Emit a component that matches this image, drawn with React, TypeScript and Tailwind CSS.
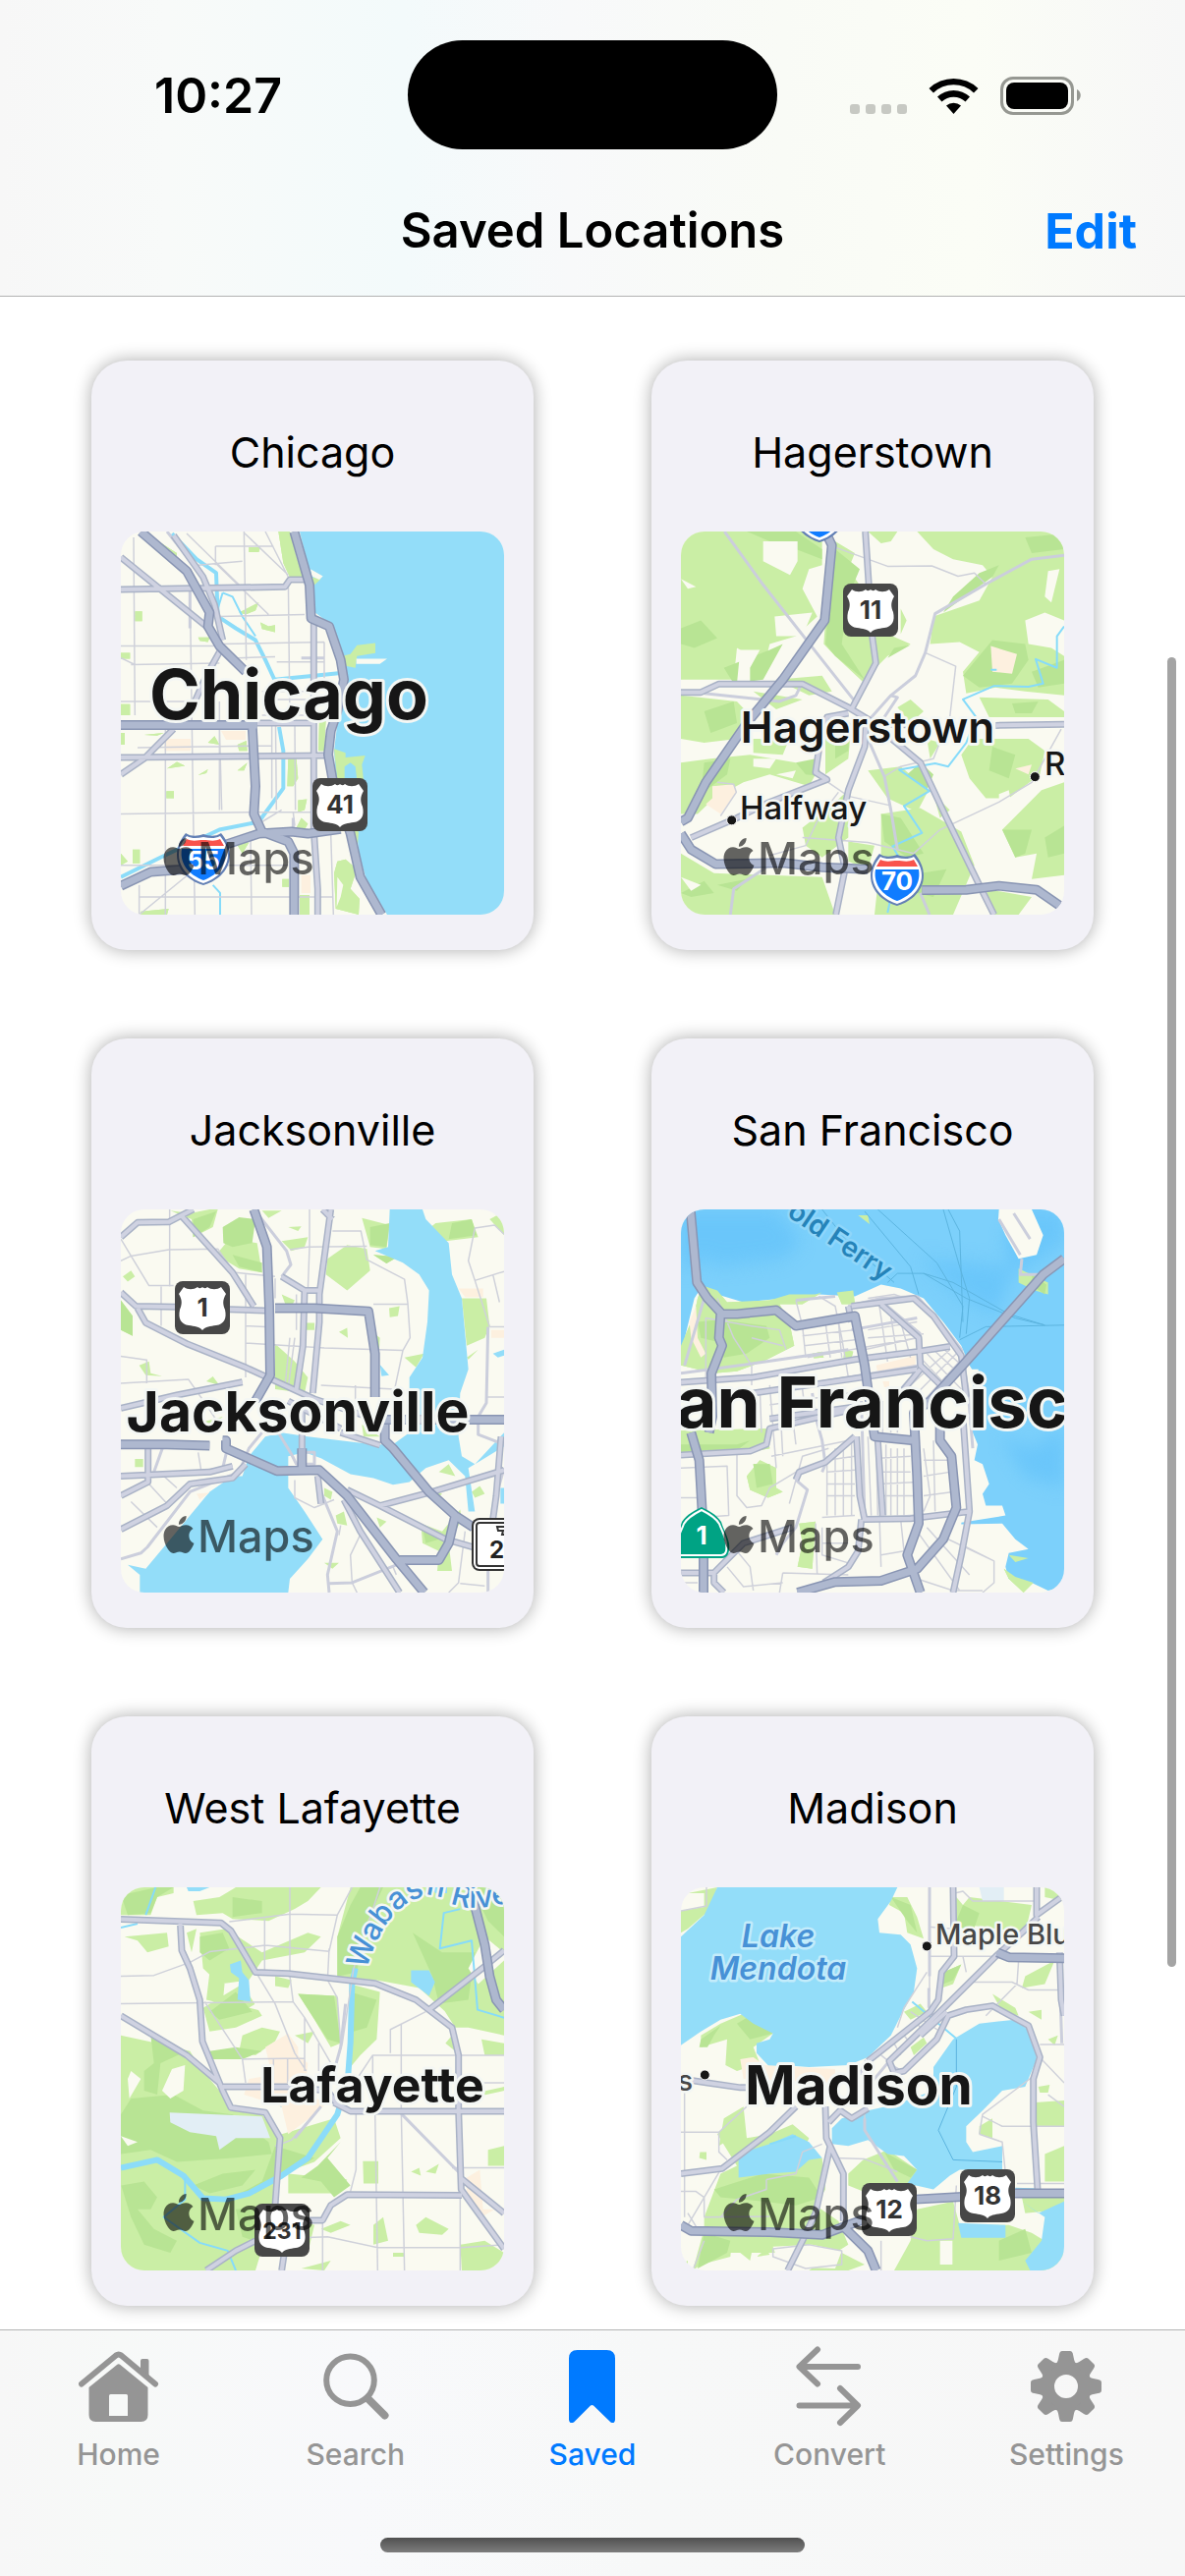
import React from "react";
import { SiApple } from "react-icons/si";

/* ---------- map model ---------- */

type Label = {
  text: string;
  x: number;
  y: number;
  size: number;
  weight?: number;
  anchor?: "start" | "middle" | "end";
  fill?: string;
  halo?: string;
  italic?: boolean;
  rotate?: number;
  curve?: string;
};

type Shield = { kind: "us" | "interstate" | "california" | "florida"; x: number; y: number; text: string };

type CityMap = {
  name: string;
  water?: string;
  deep?: string;
  waterFill?: string;
  green?: string;
  dark?: string;
  land?: string;
  peach?: string;
  pale?: string;
  river?: string;
  creek?: string;
  ferry?: string;
  minor?: string;
  street?: string;
  road?: string;
  highway?: string;
  dots?: [number, number][];
  labels: Label[];
  shields: Shield[];
};

const LAND = "#fafaf1";
const INK = "#161616";
const LAKE = "#4791d6";

const cities: CityMap[] = [
  {
    name: "Chicago",
    water:
      "M675 475 700 560 722 680 770 710 800 790 820 850 800 900 790 960 780 1030 785 1090 850 1230 855 1290 880 1360 942 1445H1299V475Z",
    green:
      "M610 475H645L665 540 690 600H650L625 555ZM707 590 740 595 718 612ZM805 790 830 785 850 763 906 757V783L850 790 845 820 815 815ZM780 1025 815 1035V1047L875 1042 865 1065 870 1105H850L845 1070 830 1060 812 1070V1105H790ZM172 677h22v25h-22zM129 782h28v15h-28zM129 912h28v28h-28zM129 985h12v30h-12zM520 515h35l-5 12h-30zM490 680 550 655 540 675 510 685ZM555 705 580 715 600 712V730L560 722ZM365 743H400L395 755 370 752ZM200 990 260 985 240 992ZM395 1010 415 993 430 1015ZM485 1015 512 1005 515 1030H490ZM270 1075 300 1058 325 1068ZM365 1092 395 1077 390 1087ZM485 1080 515 1060 505 1080ZM268 1132h23v18h-23zM640 1050h25l5 50-15 20h-18zM735 950h20l-5 80h-18zM670 1155 697 1153 690 1180 670 1185ZM680 1200 700 1215 690 1230 665 1225ZM480 1262H520L500 1290ZM165 1280h22v35h-22zM129 1290 150 1310 129 1320ZM790 1310 815 1305 850 1330 830 1380 858 1405 855 1445 785 1430 780 1340ZM675 1395h30v50h-30zM190 1437 275 1430 270 1445H190ZM225 490 300 530V543L250 510ZM825 1230 855 1235 850 1290ZM622 1355h20v20h-20z",
    land: "M848 797H942L920 810H848ZM790 1350 808 1370 800 1400 788 1425ZM708 570 746 588 735 597 712 588Z",
    peach: "M262 1000h80v30h-80zM435 980h75v22h-60zM680 1345h28v45h-28z",
    river: "M612 970 625 1030V1125L550 1210 430 1230 250 1300 129 1350M598 850 720 840 815 832M285 480 360 545 420 580 425 690 480 720 540 750 570 800 598 850",
    creek: "M440 630 470 640 500 690 540 740M440 630 425 670M410 1370 432 1390V1445",
    minor:
      "M168 490 172 940M265 970V1445M340 620 350 1190 355 1445M418 512H595M418 512V560M505 475 512 800M505 478 640 585M570 475 640 590 645 960M418 555 580 685M330 480 490 610M129 765H420M160 812 430 808M129 795 172 812M129 905H360M430 760 750 755M430 690 690 685M485 795 600 792M605 805H750M600 850 604 1180M660 960 662 1180M750 755V870M430 905V1180M180 1022 590 1017M345 900V960M129 1190 520 1186M129 1320H640M185 1400H775M185 1445 340 1340M525 1250 528 1445M185 1370V1445M770 1240 778 1445M520 1186H720M430 970 437 1180M560 1210 620 1180M655 1185 660 1220M365 560 500 550M560 880H700M560 900H700M560 940H700M590 960V1150",
    street: "M655 1200V1240M340 570V720M680 795H750M270 475 370 580 400 640",
    road: "M129 622 630 615 645 597 690 597M129 540 390 715M545 960H720M129 1047 760 1042M718 700V1230L730 1380V1445M129 1090 200 1050 290 975M290 485 380 590 415 660 440 750M430 780 390 840 355 905",
    highway:
      "M190 475 330 575 400 680 395 715 430 765 510 830M658 475 705 610 710 695 765 715 800 800 810 850 790 930 770 980 762 1040 775 1100 830 1240 860 1350 925 1445M129 965H545M530 965 540 1120 535 1190 560 1235 640 1260 658 1290V1445M129 1372 220 1337 330 1330 440 1270 550 1240 650 1235 700 1240 800 1228",
    labels: [{ text: "Chicago", x: 171, y: 191, size: 70, weight: 700, anchor: "middle" }],
    shields: [
      { kind: "us", x: 195, y: 251, text: "41" },
      { kind: "interstate", x: 57, y: 307, text: "55" },
    ],
  },
  {
    name: "Hagerstown",
    green:
      "M129 475H560L560 560 520 570 500 620 545 690 480 740 400 760 385 810 300 770 290 850 129 850ZM129 890 300 905 340 940 300 1000 200 1010 129 1000ZM129 1060 220 1050 340 1040 480 1060 540 1090 520 1120 400 1090 320 1110 230 1150 180 1190 129 1190ZM850 475H1299V700L1240 680 1180 700 1190 760 1260 770 1299 790V890L1180 880 1090 870 1000 885 990 830 1040 780 980 755 890 760 900 690 1040 650 1080 590 1050 560 960 545 900 520ZM700 475H790L770 500 740 505ZM1020 1000H1190L1240 1030 1225 1090 1130 1150 1060 1150 1010 1100 985 1040ZM1040 895 1250 900 1299 930V945H1070ZM1230 1130 1299 1110V1345L1200 1355 1215 1290 1150 1300 1110 1230ZM570 950 650 960 640 1050 570 1090ZM700 1080 800 1070 885 1130 850 1185 760 1150ZM740 1190 860 1175 985 1235 1025 1320 960 1445H720L740 1290ZM129 1290 230 1340 560 1350 600 1445H129ZM500 1225 600 1160 640 1130V1250L560 1300 510 1270ZM600 500 660 530 640 570 700 640 720 720 830 760 760 790 700 840 690 860 600 790 565 760 570 700ZM420 850 560 840 590 880 520 890ZM790 920 830 900 870 930 830 960ZM350 1000H460L440 1040 350 1035ZM1060 1380 1200 1400 1160 1445H1080ZM880 1000 920 1010 890 1050ZM800 670 818 700 800 735ZM350 880 500 900 420 925ZM640 1260 720 1270 700 1330 640 1310ZM900 1140 950 1180 920 1200Z",
    dark:
      "M600 520 675 570 640 640 620 760 690 850 600 790 570 760 585 620ZM260 820 400 775 440 760 380 850 290 860ZM200 930 290 905 300 960 220 985ZM1040 580 1100 560 1080 590 980 650 930 680 960 640ZM1080 750 1180 760 1190 800 1140 860 1040 870 990 840ZM1110 1230 1200 1230 1180 1290 1150 1300ZM330 475H480L560 520V545L480 520 400 500ZM740 1190 800 1200 870 1290 820 1300 750 1260ZM200 1060 280 1050 270 1090 190 1140ZM1080 1020 1150 1040 1130 1100 1070 1080ZM129 1390 200 1360 230 1390 160 1400ZM860 1060 900 1090 880 1130 820 1090ZM600 965 645 970 640 1030 600 1050ZM129 720 190 700 240 745 170 770 129 760ZM1180 490 1299 480V520L1200 530ZM1200 830 1299 800V860L1220 870ZM1240 1250 1299 1220V1290L1250 1300ZM780 770 830 762 760 795ZM480 1060 540 1050 560 1095 510 1090ZM860 1340 940 1330 900 1400 850 1390ZM1140 910 1220 905 1200 935 1150 935ZM240 1370 330 1355 300 1385Z",
    land: "M380 500H485V550L462 585 380 550ZM415 690 530 680 500 740 420 740ZM129 595 175 615 150 620ZM1250 575 1285 570 1260 655 1240 640ZM310 775H370L340 820 340 860 300 860ZM350 1050H420L400 1075 350 1070ZM420 1090 480 1080 470 1100ZM129 1350 190 1370 160 1385ZM1100 1140 1130 1130 1140 1170 1100 1170Z",
    peach: "M1075 765 1155 785 1140 835 1080 830ZM1150 1075 1200 1065 1190 1090ZM225 1120 290 1115 298 1135 250 1190 205 1165 225 1150Z",
    creek:
      "M1299 715 1277 740V820L1212 798 1235 860 1190 868 1085 866 990 900 1030 945 1000 1010 945 1070 905 1062 795 1078 888 1132 810 1170 865 1238 775 1272 795 1300 760 1440M1075 825h18",
    minor:
      "M600 515 760 563 895 562 975 588 1025 580 1060 608M875 782 968 816 950 945 900 1050 800 1070 750 1095M1290 975 1240 1050 1200 1110 1100 1160 920 1230 840 1290M240 1110 290 1115 298 1135 250 1195M500 1250 700 1262 840 1290M570 1105 640 1145 765 1168M610 1135 550 1200 510 1270 400 1295",
    street:
      "M262 475 380 610 560 800 660 905M1299 535 1200 545 1060 608 905 683 875 782 845 840 770 890 700 955M770 890 790 895 750 945M200 885 430 905 480 890 495 865M700 1000 750 1095 770 1180 790 1280M390 1325 290 1380 280 1445M860 1390 888 1445",
    road: "M129 882H190L245 861H500L640 920 700 950 860 1060 940 1200 1040 1370 1085 1445M692 475 705 640M712 735 724 808 650 925M160 1250 300 1200 400 1160 575 1103 540 1085 555 1000 575 945 640 935M695 950 690 1020 640 1130 610 1250 630 1330 602 1445M1090 966 1299 963M700 960 830 965",
    highway:
      "M570 475 590 510 568 700 440 850 330 960 205 1110 150 1200 129 1210M129 1240 160 1280 235 1317 440 1314 560 1325 700 1330M865 1383 1000 1382 1100 1372 1215 1382 1290 1425",
    dots: [
      [284, 1206],
      [1210, 1096],
    ],
    labels: [
      { text: "Hagerstown", x: 190, y: 215, size: 44, weight: 600, anchor: "middle" },
      { text: "Halfway", x: 60, y: 293, size: 33, weight: 500 },
      { text: "R", x: 370, y: 248, size: 33, weight: 500 },
    ],
    shields: [
      { kind: "us", x: 165, y: 53, text: "11" },
      { kind: "interstate", x: 193, y: 328, text: "70" },
      { kind: "interstate", x: 114, y: -42, text: "81" },
    ],
  },
  {
    name: "Jacksonville",
    green:
      "M280 478 340 485 400 475H425L410 520 350 545 345 500ZM560 478H620L580 497ZM460 550 545 560 560 635 490 625 420 590ZM640 520 680 518 670 530ZM620 555 700 545 690 570 650 580ZM760 600 820 565 880 575 890 630 820 680 755 640ZM865 497 950 515 940 575 890 570ZM1090 510 1200 500 1220 545 1120 555 1060 530ZM1255 500 1299 480V540ZM900 590 975 595 940 612ZM135 645 160 630 172 645 150 658ZM129 705 165 745V795L129 780ZM620 690 660 705 640 735ZM690 762H720V780H695ZM795 785 820 775 822 800ZM948 725 980 720 975 745 950 748ZM1170 700H1245L1255 770 1240 800 1185 820ZM995 850 1055 840 1030 875ZM185 870 215 860 220 890 255 897 205 895ZM390 910 410 898 430 920ZM600 815 660 860 700 900 690 940 600 930ZM1185 850 1220 830 1190 855ZM172 1107h25v20h-25zM750 1180 775 1190 770 1210 750 1200ZM785 1250 810 1240 820 1275 790 1270ZM910 1255 940 1265 920 1280ZM750 1370 795 1370 775 1385ZM1045 1270 1110 1290 1165 1235 1170 1260 1130 1320 1140 1390 1095 1390 1100 1340 1050 1320ZM1200 1190 1225 1175 1240 1195 1210 1205ZM865 1020 920 1050 870 1050ZM1100 1140 1130 1120 1150 1150ZM350 1020 440 1000 400 1030ZM905 790 920 800 915 860ZM1060 1180 1110 1195 1090 1210Z",
    dark: "M440 520 490 495 540 500 530 560 470 570 442 560ZM890 520 950 510 940 570 890 565ZM1140 510 1200 500 1215 540 1130 550ZM350 500 420 480 400 520 350 545ZM129 705 165 745V795L129 780ZM470 590 560 610V635L490 620ZM1050 1280 1100 1310 1060 1320ZM900 590 975 595 940 612Z",
    water:
      "M950 475H1050L1060 500 1130 560 1140 640 1170 700 1190 880 1165 940 1160 1050 1170 1100 1210 1120 1299 1040V1075L1230 1110 1190 1130 1210 1240 1190 1240 1180 1150 1130 1110 1060 1130 1010 1165 960 1172 900 1155 830 1145 740 1105 690 1090 640 1100V1180L690 1240 745 1310 700 1360 645 1410 640 1445H187V1400L150 1375 205 1385 290 1300 400 1190 470 1150 500 1150 520 1100 570 1050 620 1040 700 1050 800 1060 900 1070 960 1070 1010 1040V900L1050 850 1065 760 1070 680 1040 640 990 610 905 580 945 570ZM920 868 948 895 925 897ZM1265 840 1299 830V845L1280 850ZM1288 1180H1299V1220H1288Z",
    peach: "M1160 675H1235V697H1180ZM360 1195 400 1192 370 1210ZM1260 780H1299V800H1260Z",
    minor:
      "M278 475V670M129 605 160 593 275 577 425 575 470 630M129 550 215 668H290M252 670V770M129 847 208 856V915M129 915 335 905 390 970M480 635 600 645M510 640V900M510 770 570 772M510 813 750 826 990 832 1012 800 1005 712 995 652 880 602 862 530H775M645 577 700 570 880 568M705 475V570L700 680M665 690V780M645 800 630 925M660 800 640 925M900 715H1005M990 832 965 930 740 920M1299 538 1270 515 1210 522 1190 605 1210 655 1255 772M1210 655 1299 632M1265 640 1285 710M1255 772H1299M1245 950H1299M845 920V960M800 1275 795 1300M865 1290 830 1350 835 1420 850 1445M970 1400 960 1380M1180 1290 1160 1420 1130 1445M1165 1422 1240 1428M660 1160V1205L720 1230 780 1210M390 970 430 1020M365 1090 375 1140M160 1215 240 1280M215 1170 270 1220M260 1150 300 1180M600 650 600 700",
    street:
      "M550 490 635 580 648 615 620 645M1250 772 1245 965 1220 1000 1220 1045 1299 1070M1299 1130 1275 1200 1265 1260M740 1190 790 1290 760 1400 765 1445M765 1422 835 1420 970 1375M460 1060 440 1130 360 1140M260 1070 230 1140M1250 1390V1445M610 1040 650 1095 665 1120H720V1090H680M560 1040 520 1080 490 1140 340 1190 210 1330 190 1345 129 1360",
    road: "M129 545 180 508 275 507 350 475M315 492 470 635 535 720M620 645 690 680H735M690 680 685 820 665 930M770 475 735 690V760L715 940M745 475 775 500M129 685 175 720 300 722M460 728 590 732M180 725 205 762 330 815 510 875 720 955 920 1010M129 978 300 945 500 912M129 1150 400 1140 470 1125M212 1075V1165L129 1200M129 1285 270 1225 340 1170 470 1155 510 1120M682 985V1080M800 1040 920 1072M730 1150 740 1220M820 1185 920 1225 1080 1190 1299 1135M920 1225 1120 1310 1205 1330M810 1210 860 1290 980 1445M1290 1050 1275 1200 1265 1260M640 960 800 1030",
    highway:
      "M535 475 575 570 582 720 585 895 540 960M600 725H720L885 733 905 840 905 950M440 1060H450V1080L605 1137 735 1135 820 1200 970 1360 1055 1445M129 1070H270L400 1073M682 1080V1130M935 1020V1060L960 1080 1070 1190 1150 1250 1205 1280M1150 1250 1130 1320 1100 1363H980M930 1007H1299",
    labels: [{ text: "Jacksonville", x: 180, y: 226, size: 57, weight: 700, anchor: "middle" }],
    shields: [
      { kind: "us", x: 55, y: 73, text: "1" },
      { kind: "florida", x: 357, y: 314, text: "22" },
    ],
  },
  {
    name: "San Francisco",
    waterFill: "#7cd0fb",
    water:
      "M129 475H1299V1430L1250 1440 1200 1420 1130 1410 1120 1380 1130 1345 1190 1335 1150 1310 1110 1270 985 1272V1268L1120 1250 1110 1225 1060 1225 1050 1195 1070 1170 1050 1120 1025 1110 1035 1070 1010 1020 1025 890 1010 870 985 820 930 760 870 700 800 675 740 665 660 695 550 690 440 700 320 710 240 690 195 668 170 700 129 840Z",
    deep: "M129 475H420L500 560 440 600 250 620 200 600 129 630ZM1160 475H1299V560L1150 640 1110 560ZM850 600 1150 620 1090 740 980 690ZM1100 1050 1200 1080 1299 1030V1180L1180 1150Z",
    land: "M1100 475H1200L1235 540 1215 590 1160 600 1120 540 1098 500ZM1010 880H1037V893H1010Z",
    green:
      "M195 668 240 680 270 710 400 705 460 690 540 690 560 685 500 715 430 715 460 760 475 820 380 860 300 885 230 890 129 870V820L170 740 180 700ZM605 685 655 680 660 715 620 715ZM1160 625 1250 660V690L1210 680 1160 660ZM670 490 700 490 705 512ZM1145 485 1175 483 1165 500ZM129 1035 390 1030 400 1080 340 1090 129 1095ZM330 1150 370 1110 420 1130 420 1180 440 1190 395 1205 340 1185ZM490 1270 540 1265 530 1385 485 1380 500 1320ZM1115 1385 1150 1405 1205 1420 1175 1445 1130 1410ZM1130 1350 1190 1358 1150 1368ZM530 840 560 835 565 850 535 852ZM630 830 655 835 650 850H625Z",
    dark: "M180 760 240 755 300 760 390 770 400 800 330 840 260 850 240 810 190 800ZM129 1070 300 1070 340 1060 300 1085 129 1090ZM350 1120 400 1120 410 1170 360 1180ZM1200 640 1245 665 1240 690 1205 670Z",
    peach: "M725 870 845 845V870L730 890ZM155 760 175 720 180 800 205 840 190 850 160 800ZM745 910H765V925H750Z",
    ferry:
      "M560 475 640 560 780 660M730 475 910 610 990 720 980 800M690 480 830 620 855 690M930 475 980 620 1010 700 1000 790M945 475 980 530 990 760M760 660 790 637H870L960 660 1130 740 1240 768M870 637 1000 700 1150 750 1240 768M980 805 1060 772 1299 768",
    minor:
      "M480 705 500 770 510 850M550 695 600 720 620 800 640 900M570 760 585 850M610 760 620 850M500 795 660 780M505 820 660 805M515 850 850 800M700 780 850 760M735 720 760 860M770 745 790 850M800 760 830 850M700 800 870 790M345 870V920M370 930 375 1040M400 920 420 1130M430 940 440 1100M460 935 480 1070M500 930 510 1000M129 1130 270 1125 275 1250 190 1255M300 1095V1200L330 1230 375 1225 400 1180 500 1130M129 1205H185M405 1100 640 1060M400 1030 530 1000M400 970 640 940M400 1000 660 970M660 850 700 870M575 1100V1250M600 1080V1250M625 1070V1250M650 1060V1250M575 1110 660 1100M575 1140 660 1135M575 1170H660M575 1200H660M700 1050 710 1250M725 1060 730 1250M755 1070V1250M770 1080V1250M790 1080V1250M810 1080V1250M735 1105 830 1100M735 1140H830M735 1170 850 1165M735 1200H850M870 1080 890 1200 870 1240M900 1060 905 1240M870 1110H950M870 1150 950 1140M870 1200 960 1190M850 1290 980 1440M880 1280 1010 1400M920 1300 1085 1365V1420L1050 1445M1000 1330 1085 1365M560 1255 660 1250M540 1270 545 1400M560 1280 560 1350 640 1370M560 1320H640M440 1395 640 1400M440 1395 430 1445M270 1380 320 1430 440 1420M300 1340 340 1380 350 1440M129 1420H180M735 1250 740 1380M800 1260 810 1340 740 1350M850 1410 960 1440 1050 1440M345 800 440 820M205 900V750L340 770 430 780 450 830M240 700 290 800 345 870M860 850 960 940M880 840 985 930M900 830 990 900M920 820 1000 880M830 920 950 830M850 940 970 840M870 960 990 850M790 960V1040M765 960 770 1040M745 960V1040M720 960V1040M700 700 780 690 850 710M460 1220 500 1100 580 1080M690 830 850 800",
    street:
      "M129 890 350 865 640 830M480 705 600 695M570 1120 560 1060 540 1000 530 940M480 1160 515 1185 480 1280 440 1320 420 1350M140 870 200 700M1170 600 1165 640 1240 640M1100 500 1165 590M1145 485 1195 550M560 1140 570 1120M740 715 860 795 865 870 800 930M850 695 920 760 985 830 1005 930 1020 1080M400 1040 385 1075M640 720 740 700 850 695M730 700 860 790M650 780 850 750M345 940 640 900M640 900 860 870M680 960 690 1260 860 1250",
    road: "M129 913 350 900 660 855 850 835 950 822M350 940 560 915 850 880M129 1097 340 1087 390 1070 400 1030 660 980M400 1005 660 975M650 720 840 700 900 745 985 845 1000 950M660 1050 570 1115 490 1140 480 1160M665 1050 675 1200 690 1260 830 1258 1010 1240M730 1060 745 1250M990 1000 1010 1240 985 1350 960 1445M129 1395 230 1395 320 1320 470 1280M230 1395V1420L260 1445M565 1420 640 1380 670 1340 680 1260M740 715 855 800 860 870 960 950M640 720 650 760M860 880 800 940",
    highway:
      "M158 475 178 660 210 700 255 740H300L420 730 480 770 660 745 690 870 720 1050 840 1060M250 740 245 800 255 820 222 890 225 1000 215 1040M160 1040 185 1110 198 1300V1445M1299 600 1235 640 1000 860 890 960 840 990 850 1150 855 1270 820 1350 860 1445M920 1010V1060L955 1100 970 1230 930 1310 850 1385 740 1415 600 1418 485 1445",
    labels: [
      { text: "San Francisco", x: 193, y: 222, size: 71, weight: 700, anchor: "middle" },
      { text: "old Ferry", x: 107, y: 6, size: 28, weight: 600, fill: "#2583b9", halo: "#8fd6fa", rotate: 34 },
    ],
    shields: [{ kind: "california", x: -6, y: 303, text: "1" }],
  },
  {
    name: "West Lafayette",
    green:
      "M129 475H290V490L240 500 220 545 129 545ZM350 510 430 500 480 475H740L700 510 660 530 580 560 470 555 440 540 360 545ZM830 475H1299V850L1190 830 1120 790 1040 730 910 710 830 705 790 700V600ZM140 600 270 590 275 625 210 640 180 610ZM370 590 450 580 560 640 700 590 740 600 690 640 560 660 520 710 430 720 380 680ZM129 850 240 870 340 890 370 930 430 990 460 1040 560 1050 610 1110 600 1280 540 1445H129ZM500 850 560 830 615 840 600 865 540 900 490 890ZM380 780 500 720 560 800 480 830 400 840ZM670 745 790 750 800 870 770 880 720 810ZM830 720 920 740 910 860 860 900 830 930ZM620 1200 720 1170 800 1110 780 1060 620 1100ZM640 1200 820 1215 790 1250 640 1250ZM868 1168H915V1225H870ZM1015 1195 1040 1185 1045 1205ZM1060 1195 1100 1175 1090 1200ZM1030 1330 1060 1310 1130 1340 1110 1355 1040 1350ZM1165 1380 1240 1370 1299 1400V1445H1170ZM960 1400H995V1410H960ZM680 1320 720 1330 700 1400 690 1360ZM740 1340 800 1320 830 1330 770 1350ZM1250 1140 1299 1130V1180H1250ZM900 1330 930 1310 945 1370 900 1380ZM1190 1000 1299 980V990L1190 1010ZM660 850 720 840 700 870ZM1080 740 1200 700V830H1150ZM1230 860 1299 870V900H1240ZM680 1440 770 1420 750 1445ZM330 590 360 580 345 640ZM400 690 450 680 440 770 390 760ZM600 700 650 710 640 730 600 725ZM1120 870 1150 840V890Z",
    dark: "M130 495 240 475H290L240 500 220 540 150 545ZM790 600 830 520 860 475H930L870 580 850 690 790 700ZM370 600 440 590 460 630 400 660 370 640ZM220 850 330 890 250 920 240 1000 200 990 200 940 230 920ZM160 1010 290 1000 380 1040 470 1050 580 1120 590 1150 470 1160 300 1170 220 1140 129 1150V1050ZM600 1130 720 1160 600 1220 540 1250 470 1260 560 1220ZM730 1180 800 1120 760 1160 830 1230 780 1260 740 1220 680 1210ZM670 745 780 750 800 870 760 860ZM130 1230 200 1220 240 1260 220 1290 180 1290 230 1340 300 1370 280 1400 200 1380 160 1310ZM1020 590 1110 640 1210 640 1190 760 1100 770 1080 700ZM1200 475H1299V600L1250 560ZM830 740 910 760 880 830 840 840ZM400 890 480 880 560 890 500 910 410 910ZM470 500 560 510 560 540 470 550ZM400 790 480 740 530 790 430 810ZM440 1200 540 1190 500 1230 400 1250 350 1230ZM480 1290 580 1280 570 1380 500 1360Z",
    land: "M285 935 325 925 320 990 280 1010 255 990ZM160 940 190 960 155 1010 150 960ZM305 850 380 840 370 880 320 880ZM520 780 560 760 570 790ZM1190 680 1240 600 1299 640V660L1220 720ZM129 1105 180 1120 150 1130Z",
    peach: "M570 880 640 845 670 880 670 900 700 920 690 1000 760 1020 720 1050 640 1100 620 1030 505 1000 520 960 590 950ZM1185 1210 1225 1190 1235 1290 1270 1290 1230 1310 1185 1250Z",
    pale: "M278 1045 560 1055 585 1110 480 1110 430 1140 420 1105 340 1095 280 1070Z",
    water: "M462 670 495 660 500 690 520 710 525 765 485 760 490 705 465 690ZM1015 685H1070L1088 715 1070 750 1015 715ZM615 1020 640 1010 642 1035 615 1030ZM330 475H400L370 485 335 485ZM1070 475H1125V490H1090Z",
    river:
      "M845 680 835 720 830 870 822 960M822 960 790 1050 700 1160 620 1205 520 1250 450 1265 380 1262 320 1205 240 1165 129 1185",
    creek: "M235 475 205 545M129 577 180 567M1165 530 1115 540 1103 630 1200 610 1218 785 1299 805M325 1210V1265L260 1310 370 1375 455 1395 480 1445",
    minor:
      "M129 700 230 698 340 665 400 638 570 622 765 637M460 562 645 543 790 545 835 475M645 475V700L655 765 690 805 770 920M568 555V690M765 630 760 710 790 755 800 870M790 545 765 637M129 770 655 765M385 765 500 910 510 970M500 910 690 908M545 695 600 770 660 895 695 940M690 805V940M733 870V940M595 910V970M638 910V970M920 475 840 680 805 870 780 940M985 820V1040L995 1445M952 895V835L1060 790M850 960 898 900H1299M898 900V950M1090 970H1299M847 1040V1190L830 1245M905 1040 913 1445M1140 1185H1299M680 1362 760 1360 913 1387H1165L1299 1380M1165 1260V1445M745 1310V1445M600 1130 650 1115 740 1030",
    street: "M985 1048 1165 1200M660 1110 740 1030M815 770 800 880 780 940",
    road: "M129 556 435 565 465 585 540 690 640 693 905 718 1030 760 1140 830 1160 900V1040L1168 1240 1299 1390M310 560 315 635 340 680 370 760 378 865 440 990 465 1033 570 1045 615 1110 600 1280M129 800 330 900 430 970M440 980H640M780 1020 830 1042 1299 1042M1070 785 1240 675 1299 635M1165 1210 1299 1300M700 1318H745L770 1280 820 1253 1170 1255M390 1445 480 1395 540 1370M628 1400 620 1445M640 980 760 990 790 1025",
    highway: "M1195 475 1240 620 1255 700 1275 760 1299 785",
    labels: [
      { text: "Lafayette", x: 256, y: 219, size: 50, weight: 700, anchor: "middle" },
      {
        text: "Wabash River",
        x: 0,
        y: 0,
        size: 31,
        weight: 500,
        fill: LAKE,
        curve: "M250 84C258 56 272 24 300 12C315 5 322 9 332 14C350 24 370 24 420 8",
      },
    ],
    shields: [{ kind: "us", x: 136, y: 322, text: "231" }],
  },
  {
    name: "Madison",
    green:
      "M150 490 240 475 220 530 150 580 129 590V535L200 525V490ZM770 500 820 500 850 550 870 605 820 590 810 540 765 520ZM990 520 1010 500 1200 520 1180 590 960 565 970 500ZM1240 475H1299V510L1240 500ZM190 850 250 820 320 795 350 820 410 845 350 880 370 920 300 940 265 925 270 860 190 880ZM930 690 985 670 960 720 925 730ZM1180 700 1270 660 1240 720 1170 730ZM1080 745 1150 780 1160 800 1110 790ZM1190 790 1230 785 1230 810ZM240 1100 320 1030 330 1110 400 1100 470 1075 520 1110 500 1150 560 1160 570 1240 540 1280 610 1320 640 1380 600 1400 200 1400 200 1310 250 1200 300 1180ZM260 1060 320 1030V1090L245 1130ZM685 1165 760 1140 850 1190 830 1225 700 1250 640 1230 640 1200ZM850 1290 960 1270 980 1330 1130 1330 1200 1350 1299 1400V1445H780L830 1370ZM1040 1080 1080 1060 1080 1110 1040 1100ZM1210 1020 1299 1015V1080H1210ZM1240 1150 1299 1130V1220H1240ZM187 1145H207V1165L185 1160ZM1250 860 1280 850 1270 875ZM1220 980 1255 975 1250 995 1225 995ZM200 1340 285 1360 280 1410 190 1430 165 1445ZM310 1400 350 1380 340 1420ZM360 1410 390 1390 400 1405ZM560 1420 620 1400 690 1430 640 1445H520ZM810 790 860 770 880 790 830 810ZM830 880 870 855 880 870 840 900ZM129 1430 150 1420V1445H129ZM1170 1260 1299 1260V1290L1180 1300Z",
    dark: "M190 860 250 825 230 850 210 880 185 880ZM300 820 340 800 410 845 340 860ZM230 1240 380 1200 520 1210 560 1260 480 1280 380 1270 250 1260ZM750 1145 850 1190 830 1210 780 1190ZM770 500 830 520 850 590 820 560ZM200 1350 280 1370 270 1400 180 1440ZM1100 1370 1180 1340 1200 1400 1100 1420ZM930 690 985 670 960 710 930 720ZM990 520 1040 540 1020 590 965 570Z",
    land: "M920 1370H958V1430H920ZM410 1385 530 1380 620 1395 600 1440 430 1435Z",
    peach: "M310 910 350 905 385 925 600 935 600 970 320 960Z",
    pale: "M1040 475H1115V510H1050Z",
    water:
      "M240 475H790L770 510 730 555 735 590 800 595 830 620 850 680 840 740 800 800 770 850 700 905 640 925 520 930 440 925 400 930 360 895V870L400 860 410 845 350 820 310 795 250 810 190 840 129 875V600L200 545ZM305 1150 400 1125 470 1100 520 1120 560 1160 520 1165 480 1195 400 1200 305 1210ZM590 1085 620 1060 700 1040 780 1025 900 990 900 930 960 860 1040 820 1150 810 1210 850 1215 910 1180 980 1110 990 1050 1040 1000 1080V1120L1020 1145 1110 1130V1190L980 1190 950 1205 900 1240 820 1225 850 1190 810 1155 760 1150 700 1115 640 1130 590 1125ZM975 1325 1120 1330V1362H985ZM1170 1270 1220 1300 1299 1270V1445H1195L1180 1420 1230 1370 1240 1310Z",
    creek: "M835 765 970 858M400 1125 480 1105M1150 1238 1220 1240",
    ferry: "M970 860V980L915 1090 960 1165 1110 1170",
    minor:
      "M129 535 207 522V475M888 475V740M888 650H1080M965 490 990 485 1020 510H1210M1160 660 1155 720 1060 800M1010 715H1140L1190 735H1299M880 690 810 780 790 830M885 575 960 580M990 650 1000 690M129 1095H245L330 1030M245 1095V1145L270 1165M140 990V1310M129 1245H175L200 1260V1310M250 1190 200 1260 150 1330M600 1160 690 1163 790 1195M1040 1100 1050 1050 1210 950M1040 1100 1110 1120 1120 1200M1050 1055 1110 1080H1299M1225 873H1299M1230 910 1299 970M970 1230 960 1365 880 1370 830 1360M200 1310 400 1308M390 1215 480 1200 500 1145 560 1125M390 1215V1240L300 1265 250 1310M1155 1225H1299M410 1390 520 1380 620 1395V1430L510 1440 410 1410ZM200 1370 165 1445M740 1370V1445M150 1300 180 1340M1250 1000 1299 1030M690 1050V1090L790 1220M740 900 770 920M780 870 800 900M810 850 830 870M850 820 870 840M830 790 920 840M720 960 760 920",
    street: "M886 730V780M690 1060V1090L790 1220M888 475V700M1285 700 1292 870M700 980 760 920 800 940",
    road: "M129 960 210 970 310 982H440M960 475 963 650 925 690 915 760 890 790 700 915M129 1200 255 1187 400 1095 480 1030M1215 475V545L1299 495M1220 550 1170 590 1090 650 920 790 765 915 780 945 810 940 910 860 945 800 1000 785 1080 775 1190 825 1225 905 1205 960V1070L1218 1240M570 1030 573 1110 625 1200V1320M585 1130 540 1300 500 1370 455 1445M580 1070 615 1040 650 1060 700 1035M1285 640 1290 760 1299 800M700 915 680 950M940 790 860 850",
    highway:
      "M1095 640 1130 652 1299 655M129 1330 160 1345 400 1348 560 1355 640 1330 690 1315M845 1265 1000 1258M1145 1250H1299M620 1330 700 1395 725 1445",
    dots: [
      [880, 624],
      [202, 950],
    ],
    labels: [
      { text: "Madison", x: 181, y: 221, size: 55, weight: 700, anchor: "middle" },
      { text: "Lake", x: 99, y: 61, size: 32, weight: 600, anchor: "middle", italic: true, fill: LAKE, halo: "#c3ecfb" },
      { text: "Mendota", x: 99, y: 94, size: 32, weight: 600, anchor: "middle", italic: true, fill: LAKE, halo: "#c3ecfb" },
      { text: "Maple Bluff", x: 259, y: 58, size: 29, weight: 500, fill: "#474747" },
      { text: "s", x: 12, y: 207, size: 29, weight: 500, anchor: "end", fill: "#474747" },
    ],
    shields: [
      { kind: "us", x: 184, y: 301, text: "12" },
      { kind: "us", x: 284, y: 287, text: "18" },
    ],
  },
];

/* ---------- map drawing ---------- */

function Line({ d, color, width }: { d?: string; color: string; width: number }) {
  if (!d) return null;
  return (
    <path
      d={d}
      fill="none"
      stroke={color}
      strokeWidth={width}
      strokeLinejoin="round"
      vectorEffect="non-scaling-stroke"
    />
  );
}

function RouteShield({ kind, x, y, text }: Shield) {
  const size = text.length > 2 ? 23 : 26;
  return (
    <g transform={`translate(${x} ${y})`} fontWeight={700} fontSize={size} textAnchor="middle">
      {kind === "us" && (
        <>
          <rect width="56" height="54" rx="8" fill="#474747" />
          <path
            d="M9 6C13 9 19 9 23 6C25 8 27 7 28 6C29 7 31 8 33 6C37 9 43 9 47 6L52 13C48 20 49 24 51 29C53 38 50 44 42 45C36 46 31 46 28 50C25 46 20 46 14 45C6 44 3 38 5 29C7 24 8 20 4 13Z"
            fill="#fff"
          />
          <text x="28" y="36" fill="#333">{text}</text>
        </>
      )}
      {kind === "interstate" && (
        <>
          <path
            d="M9 0C15 4 21 3 27 1C33 3 39 4 45 0C50 6 54 13 54 22C54 40 38 50 27 53C16 50 0 40 0 22C0 13 4 6 9 0Z"
            fill="#6380b5"
          />
          <path
            d="M10 3C16 6 21 5 27 4C33 5 38 6 44 3C48 8 52 14 52 22C52 38 37 48 27 51C17 48 2 38 2 22C2 14 6 8 10 3Z"
            fill="#fff"
          />
          <path d="M10 6C16 9 22 7 27 7C32 7 38 9 44 6L48 13H6Z" fill="#f9534d" />
          <path d="M5 16H49C52 34 38 44 27 48C16 44 2 34 5 16Z" fill="#107cff" />
          <text x="27" y="37" fill="#fff">{text}</text>
        </>
      )}
      {kind === "california" && (
        <>
          <path d="M27 0C33 3 42 7 47 15C49 22 53 28 55 37C56 45 54 52 48 52H6C0 52 -2 45 -1 37C1 28 5 22 7 15C12 7 21 3 27 0Z" fill="#00a384" />
          <path
            d="M27 3C33 6 41 10 45 17C47 23 51 29 52 37C53 44 52 49 47 49H7C2 49 1 44 2 37C3 29 7 23 9 17C13 10 21 6 27 3Z"
            fill="none"
            stroke="#fff"
            strokeWidth="2"
          />
          <text x="27" y="38" fill="#fff">{text}</text>
        </>
      )}
      {kind === "florida" && (
        <>
          <rect width="64" height="54" rx="8" fill="#333" />
          <rect x="2" y="2" width="60" height="50" rx="6" fill="#fff" />
          <rect x="5" y="5" width="54" height="44" rx="3" fill="#fff" stroke="#333" strokeWidth="2" />
          <path d="M26 9H42V12H36L34 17H31L32 13H27Z" fill="none" stroke="#333" strokeWidth="2" />
          <text x="18" y="41" fill="#222" textAnchor="start" fontSize="24">{text}</text>
        </>
      )}
    </g>
  );
}

function MapLabel({ label, id }: { label: Label; id: string }) {
  const { text, x, y, size, weight = 600, anchor = "start", fill = INK, halo = "#f4f7f4", italic, rotate, curve } = label;
  const shared = {
    fontSize: size,
    fontWeight: weight,
    fontStyle: italic ? "italic" : "normal",
    fill,
    stroke: halo,
    strokeWidth: size > 40 ? 6 : 5,
    strokeLinejoin: "round" as const,
    paintOrder: "stroke",
  };
  if (curve) {
    return (
      <>
        <path id={id} d={curve} fill="none" />
        <text {...shared}>
          <textPath href={`#${id}`}>{text}</textPath>
        </text>
      </>
    );
  }
  return (
    <text {...shared} x={x} y={y} textAnchor={anchor} transform={rotate ? `rotate(${rotate} ${x} ${y})` : undefined}>
      {text}
    </text>
  );
}

function MapSnapshot({ city }: { city: CityMap }) {
  const water = city.waterFill ?? "#93ddf9";
  const parksOverWater = Boolean(city.waterFill) || city.name === "Chicago";
  return (
    <div className="relative aspect-square w-full overflow-hidden rounded-3xl">
      <svg viewBox="0 0 390 390" className="block size-full" role="img" aria-label={`Map of ${city.name}`}>
        <rect width="390" height="390" fill={LAND} />
        <g transform="scale(0.33333 0.40206) translate(-129 -475)">
          <path d={city.green} fill="#caeea5" />
          <path d={city.dark} fill="#b8e494" />
          <path d={city.water} fill={water} />
          {city.deep && (
            <>
              <clipPath id="deep-water">
                <path d={city.water} />
              </clipPath>
              <g clipPath="url(#deep-water)">
                <path d={city.deep} fill="#5fc0fa" opacity="0.6" className="blur-xl" />
              </g>
            </>
          )}
          {parksOverWater && <path d={city.green} fill="#caeea5" />}
          {parksOverWater && <path d={city.dark} fill="#b8e494" />}
          <path d={city.land} fill={LAND} />
          <path d={city.peach} fill="#fdf0df" />
          <path d={city.pale} fill="#e2eef5" />
          <Line d={city.ferry} color="#5cb4df" width={1} />
          <Line d={city.river} color="#8cdcf9" width={city.name === "West Lafayette" ? 6 : 4} />
          <Line d={city.creek} color="#86dbfa" width={2} />
          <Line d={city.minor} color="#cfd1da" width={1.5} />
          <Line d={city.street} color="#cbcedc" width={3} />
          <Line d={city.road} color="#a9b2c6" width={7} />
          <Line d={city.road} color="#cfd2e1" width={4} />
          <Line d={city.highway} color="#8995b3" width={10} />
          <Line d={city.highway} color="#aeb8cf" width={7} />
        </g>
        {city.dots?.map(([x, y]) => (
          <circle
            key={x}
            cx={(x - 129) / 3}
            cy={(y - 475) * 0.402}
            r="5"
            fill={INK}
            stroke="#fff"
            strokeWidth="1"
          />
        ))}
        <g fontFamily="Inter, sans-serif">
          {city.labels.map((label, i) => (
            <MapLabel key={label.text} label={label} id={`${city.name.replace(" ", "-")}-${i}`} />
          ))}
          {city.shields.map((shield) => (
            <RouteShield key={shield.text} {...shield} />
          ))}
        </g>
      </svg>
      <div className="absolute bottom-10 left-10 flex items-end text-black opacity-60">
        <SiApple size={38} aria-hidden="true" />
        <span className="text-[45px] leading-[34px] font-medium">Maps</span>
      </div>
    </div>
  );
}

function LocationCard({ city }: { city: CityMap }) {
  return (
    <li className="rounded-[36px] bg-[#f2f1f7] px-[30px] pb-9 shadow-[0_0_18px_rgba(0,0,0,0.33)]">
      <h2 className="pt-[66px] pb-[54px] text-center text-[43px] leading-[54px] font-normal">{city.name}</h2>
      <MapSnapshot city={city} />
    </li>
  );
}

/* ---------- chrome ---------- */

function StatusBar() {
  return (
    <div className="grid grid-cols-[1fr_376px_1fr] items-center pt-[41px]">
      <time className="pl-[29px] text-center text-[50px] leading-[60px] font-semibold">10:27</time>
      <div className="h-[111px] rounded-full bg-black" />
      <svg viewBox="865 77 236 40" className="ml-[74px] h-10 w-[236px]" aria-hidden="true">
        <g fill="#c7c9c3">
          <rect x="865" y="106" width="10" height="10" rx="3" />
          <rect x="881" y="106" width="10" height="10" rx="3" />
          <rect x="897" y="106" width="10" height="10" rx="3" />
          <rect x="913" y="106" width="10" height="10" rx="3" />
        </g>
        <path d="M945.500 90A36 36 0 0 1 995.500 90L991 94.500A29.500 29.500 0 0 0 950 94.500Z" />
        <path d="M954 98.500A24 24 0 0 1 987 98.500L982.500 103.500A17.500 17.500 0 0 0 958.500 103.500Z" />
        <path d="M963 107.500A12 12 0 0 1 978 107.500L970.500 116Z" />
        <rect x="1019.500" y="79.500" width="72" height="36" rx="11.500" fill="none" stroke="#969892" strokeWidth="3" />
        <rect x="1024" y="84" width="63" height="27" rx="8" />
        <path d="M1096 91C1101 93 1101 101 1096 103Z" fill="#969892" />
      </svg>
    </div>
  );
}

function HomeIcon() {
  return (
    <svg viewBox="78 38 82 82" className="size-[82px]" aria-hidden="true">
      <path d="M141 66V53q0-2 2-2h4.500q2 0 2 2V73Z" fill="currentColor" />
      <path d="M81 76.500 116 47.500q2.700-2 5.400 0L156 76.500" fill="none" stroke="currentColor" strokeWidth="6" strokeLinecap="round" />
      <path
        fillRule="evenodd"
        d="M88.500 80 117 57q1.700-1.400 3.400 0L148.500 80V108q0 7-7 7H95.500q-7 0-7-7ZM110.500 87q-1.500 0-1.500 1.500V109h19V88.500q0-1.500-1.500-1.500Z"
        fill="currentColor"
      />
    </svg>
  );
}

function SearchIcon() {
  return (
    <svg viewBox="320 38 82 82" className="size-[82px]" aria-hidden="true">
      <g fill="none" stroke="currentColor" strokeLinecap="round">
        <circle cx="355.500" cy="72.800" r="24.300" strokeWidth="6" />
        <path d="M374 92 390.500 108.500" strokeWidth="8" />
      </g>
    </svg>
  );
}

function SavedIcon() {
  return (
    <svg viewBox="562 38 82 82" className="size-[82px]" aria-hidden="true">
      <path
        d="M587.500 42H617.500Q626 42 626 50.500V113Q625.500 117.500 621.500 115.500L604 98.500Q602.500 97.500 601 98.500L584 115.500Q579.500 117.500 579 113V50.500Q579 42 587.500 42Z"
        fill="currentColor"
      />
    </svg>
  );
}

function ConvertIcon() {
  return (
    <svg viewBox="200 38 82 82" className="size-[82px]" aria-hidden="true">
      <g fill="none" stroke="currentColor" strokeWidth="6" strokeLinecap="round" strokeLinejoin="round">
        <path d="M229 41.500 210.500 59 229 76.500M211 59H270" />
        <path d="M252 81 270 98.500 252 116M210.500 98.500H269" />
      </g>
    </svg>
  );
}

function SettingsIcon() {
  return (
    <svg viewBox="-41 -41 82 82" className="size-[82px]" aria-hidden="true">
      <circle r="19" fill="none" stroke="currentColor" strokeWidth="14" />
      {[0, 45, 90, 135, 180, 225, 270, 315].map((angle) => (
        <path
          key={angle}
          d="M-10-22Q-8-26-7-32.500-6.500-36-4-36H4Q6.500-36 7-32.500 8-26 10-22Z"
          transform={`rotate(${angle})`}
          fill="currentColor"
        />
      ))}
    </svg>
  );
}

const tabs = [
  { label: "Home", Icon: HomeIcon },
  { label: "Search", Icon: SearchIcon },
  { label: "Saved", Icon: SavedIcon },
  { label: "Convert", Icon: ConvertIcon },
  { label: "Settings", Icon: SettingsIcon },
];

export default function App() {
  return (
    <div className="flex min-h-screen flex-col bg-white font-[Inter,sans-serif] text-black">
      <header className="border-b border-[#b3b3b3] bg-[linear-gradient(90deg,#f7f7f7_0%,#f8faf9_14%,#f3fafb_34%,#f8f9fa_48%,#f9fbf6_66%,#fbfdf6_82%,#f7f7f7_100%)]">
        <StatusBar />
        <div className="grid h-[149px] grid-cols-[1fr_auto_1fr] items-center pt-4 pr-[49px] pl-[49px]">
          <span />
          <h1 className="text-[49px] leading-[60px] font-semibold">Saved Locations</h1>
          <button type="button" className="justify-self-end text-[50px] leading-[60px] font-bold text-[#007aff]">
            Edit
          </button>
        </div>
      </header>

      <main className="relative grow">
        <ul className="grid grid-cols-2 gap-x-[120px] gap-y-[90px] px-[93px] pt-[65px] pb-6">
          {cities.map((city) => (
            <LocationCard key={city.name} city={city} />
          ))}
        </ul>
        <div className="absolute top-[367px] right-[9px] h-[1333px] w-[9px] rounded-full bg-[#a4a4a4]" />
      </main>

      <footer className="border-t border-[#b3b3b3] bg-[linear-gradient(90deg,#f7f7f7_0%,#f7f9f8_10%,#f8f9fb_30%,#f7f8f8_55%,#f7f7f7_100%)] pb-6">
        <nav className="grid grid-cols-5 pt-4">
          {tabs.map(({ label, Icon }) => (
            <button
              key={label}
              type="button"
              aria-current={label === "Saved" ? "page" : undefined}
              className="flex flex-col items-center gap-2.5 text-[#959595] aria-[current=page]:text-[#007aff]"
            >
              <Icon />
              <span className="text-[30px] leading-9 font-medium">{label}</span>
            </button>
          ))}
        </nav>
        <div className="mx-auto mt-[67px] h-[15px] w-[432px] rounded-full bg-[linear-gradient(180deg,#505050,#7d7d7d)]" />
      </footer>
    </div>
  );
}
